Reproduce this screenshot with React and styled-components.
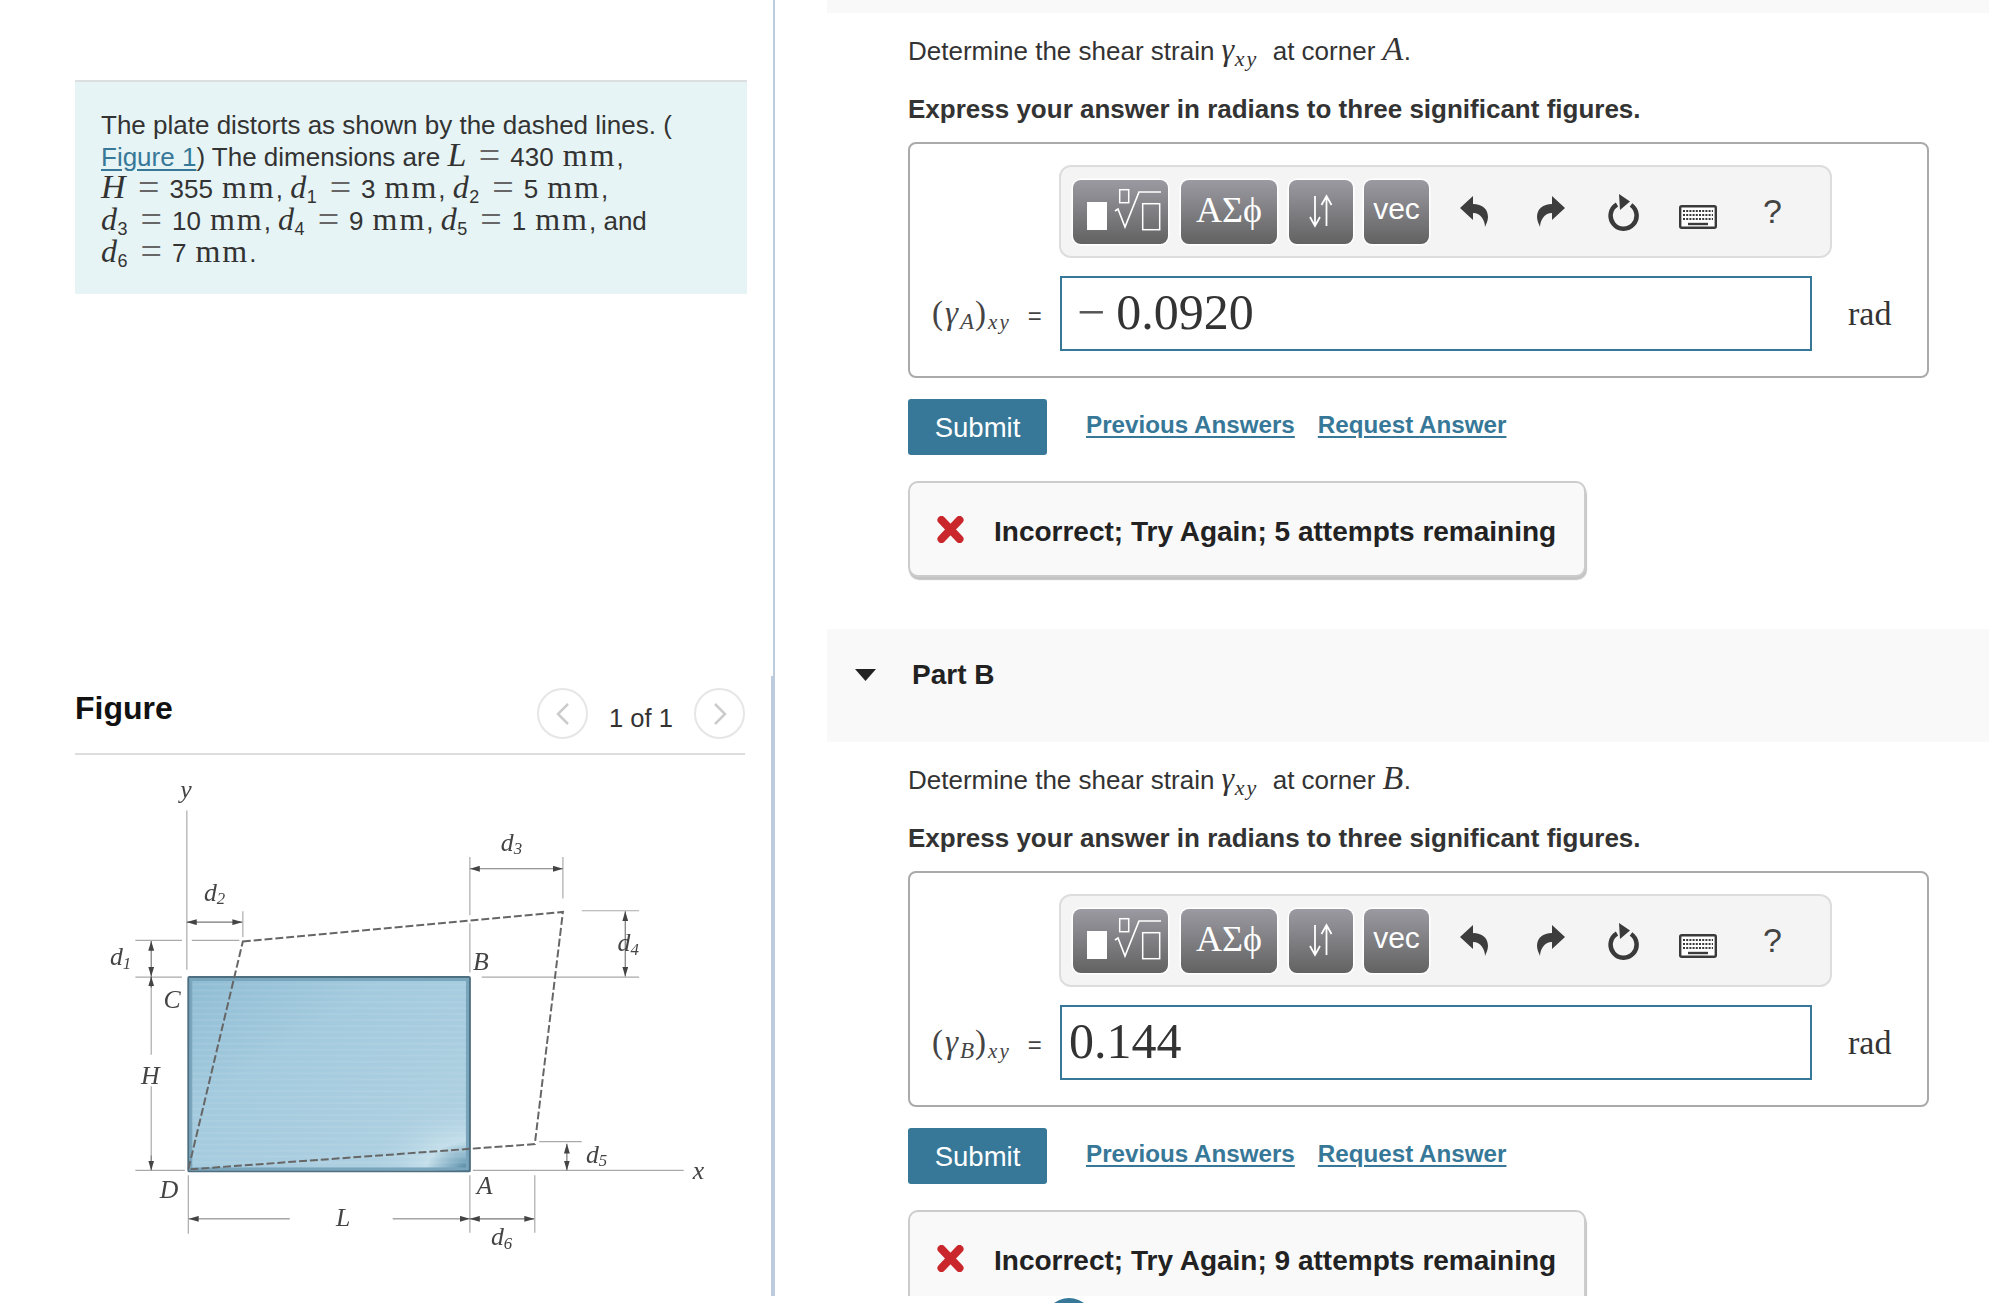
import React from 'react'
import styled, { createGlobalStyle } from 'styled-components'

const sans = `"Liberation Sans", Arial, sans-serif`
const serif = `"Liberation Serif", "Times New Roman", serif`
const teal = '#377898'

const Global = createGlobalStyle`
  html, body { margin: 0; padding: 0; background: #fff; }
  body { font-family: ${sans}; color: #333; }
`

const Screen = styled.div`
  position: relative;
  width: 1989px;
  height: 1303px;
  overflow: hidden;
  background: #fff;
`
const Page = styled.div`
  display: flex;
  height: 1296px;
  overflow: hidden;
`
const LeftPanel = styled.div`
  width: 696px;
  flex: none;
  padding: 80px 0 0 75px;
`
const InfoBox = styled.div`
  width: 672px;
  height: 214px;
  box-sizing: border-box;
  padding: 27px 0 0 26px;
  background: #e7f4f5;
  border-top: 2px solid #dcdfe0;
  font-size: 26px;
  line-height: 32px;
`
const Line = styled.div`
  white-space: nowrap;
`
const FigLink = styled.a`
  color: ${teal};
  text-decoration: underline;
  text-underline-offset: 3px;
`
const V = styled.i`
  font-family: ${serif};
  font-size: ${({ big }) => (big ? 34 : 32)}px;
  line-height: 0;
  letter-spacing: 0.5px;
`
const Sb = styled.span`
  font-size: 18px;
  vertical-align: -5px;
  line-height: 0;
  margin-right: 1px;
`
const Eq = styled.span`
  font-family: ${serif};
  font-size: 38px;
  line-height: 0;
  vertical-align: -2px;
  margin: 0 10px 0 12px;
  color: #666;
`
const Unit = styled.span`
  font-family: ${serif};
  font-size: 32px;
  line-height: 0;
  letter-spacing: 2px;
  margin-left: 9px;
`
const FigureHead = styled.div`
  margin-top: 394px;
  width: 670px;
  height: 65px;
  display: flex;
  justify-content: space-between;
  border-bottom: 2px solid #ddd;
`
const FigureTitle = styled.h2`
  margin: 0;
  font-size: 32px;
  line-height: 40px;
  font-weight: 700;
  color: #111;
`
const Pager = styled.div`
  display: flex;
  width: 208px;
  justify-content: space-between;
`
const PageCount = styled.span`
  font-size: 25.5px;
  line-height: 32px;
  padding-top: 14px;
`
const PageBtn = styled.div`
  width: 51px;
  height: 51px;
  box-sizing: border-box;
  border: 2px solid #e6e6e6;
  border-radius: 50%;
  display: flex;
  align-items: center;
  justify-content: center;
`
const FigureSvg = styled.svg`
  display: block;
  margin: 1px 0 0 1px;
  width: 670px;
  height: 540px;
  filter: blur(0.4px);
`
const Label = styled.text`
  font-family: ${serif};
  font-style: italic;
  font-size: ${({ size }) => size || 26}px;
  fill: #444;
  text-anchor: middle;
  dominant-baseline: central;
`
const Divider = styled.div`
  width: 4px;
  flex: none;
  display: flex;
  flex-direction: column;
  align-items: flex-end;
`
const DividerPart = styled.div`
  background: #bccbde;
  width: ${({ wide }) => (wide ? 4 : 2)}px;
  height: ${({ wide }) => (wide ? 620 : 676)}px;
`
const RightPanel = styled.div`
  margin-left: 52px;
  flex: 1;
`
const Strip = styled.div`
  height: ${({ h }) => h}px;
  background: #f9f9f9;
  display: flex;
  align-items: flex-start;
  padding-left: 28px;
  box-sizing: border-box;
`
const PartTitle = styled.h3`
  margin: 30px 0 0 36px;
  font-size: 28px;
  line-height: 32px;
  font-weight: 700;
  color: #222;
`
const Caret = styled.svg`
  width: 21px;
  height: 12px;
  margin-top: 40px;
`
const PartBody = styled.div`
  padding: 22px 0 52px 81px;
  height: 616px;
  box-sizing: border-box;
`
const Prompt = styled.p`
  margin: 0 0 26px;
  font-size: 26px;
  line-height: 32px;
  white-space: nowrap;
`
const Instruction = styled.p`
  margin: 0 0 17px;
  font-size: 26px;
  line-height: 32px;
  font-weight: 700;
`
const GammaSub = styled.span`
  font-family: ${serif};
  font-style: italic;
  font-size: 22px;
  vertical-align: -6px;
  line-height: 0;
  letter-spacing: 2px;
`
const AnswerBox = styled.div`
  width: 1021px;
  height: 236px;
  box-sizing: border-box;
  border: 2px solid #aaa;
  border-radius: 8px;
  padding-top: 21px;
`
const Toolbar = styled.div`
  margin-left: 149px;
  width: 773px;
  height: 93px;
  box-sizing: border-box;
  background: #f4f4f4;
  border: 2px solid #ddd;
  border-radius: 12px;
  display: flex;
  align-items: flex-start;
  padding: 13px 0 0 12px;
`
const MathBtn = styled.div`
  width: ${({ w }) => w}px;
  height: 64px;
  margin-right: ${({ gap }) => gap}px;
  flex: none;
  border-radius: 8px;
  background: linear-gradient(#9b9aa2, #626262);
  box-shadow: 0 0 0 1.5px #fff;
  color: #fff;
  display: flex;
  align-items: center;
  justify-content: center;
  font-family: ${({ sans: s }) => (s ? sans : serif)};
  font-size: ${({ sans: s }) => (s ? 30 : 36)}px;
  padding-bottom: ${({ sans: s }) => (s ? 6 : 4)}px;
  box-sizing: border-box;
`
const ToolIcon = styled.svg`
  flex: none;
  margin-left: ${({ ml }) => ml}px;
  margin-top: ${({ mt }) => mt}px;
`
const HelpMark = styled.span`
  flex: none;
  margin: 11px 0 0 46px;
  font-size: 34px;
  line-height: 40px;
  color: #444;
`
const AnswerRow = styled.div`
  margin-top: 18px;
  display: flex;
  align-items: center;
`
const AnswerLabel = styled.div`
  width: 150px;
  padding-left: 22px;
  box-sizing: border-box;
  font-family: ${serif};
  font-size: 33px;
  letter-spacing: 2px;
  white-space: nowrap;
  color: #444;
`
const SmallSub = styled.span`
  font-family: ${serif};
  font-style: italic;
  font-size: ${({ s }) => s || 21}px;
  vertical-align: -5px;
  line-height: 0;
  letter-spacing: ${({ s }) => (s ? 1 : 2)}px;
`
const EqSign = styled.span`
  font-family: ${sans};
  font-size: 24px;
  margin-left: 17px;
`
const Field = styled.div`
  width: 752px;
  height: 75px;
  box-sizing: border-box;
  border: 2px solid ${teal};
  padding-left: 7px;
  font-family: ${serif};
  font-size: 50px;
  line-height: 68px;
  color: #333;
`
const Minus = styled.span`
  margin: 0 11px 0 8px;
  color: #555;
`
const UnitText = styled.div`
  margin-left: 36px;
  font-family: ${serif};
  font-size: 34px;
  color: #333;
`
const ActionRow = styled.div`
  margin-top: 21px;
  display: flex;
  align-items: flex-start;
`
const SubmitBtn = styled.button`
  width: 139px;
  height: 56px;
  border: 0;
  border-radius: 3px;
  background: ${teal};
  color: #fff;
  font-family: ${sans};
  font-size: 27.5px;
  padding: 2px 0 0;
  margin-right: 39px;
`
const ActionLink = styled.a`
  font-size: 24.2px;
  line-height: 30px;
  margin: 11px 23px 0 0;
  font-weight: 700;
  color: ${teal};
  text-decoration: underline;
  text-underline-offset: 3px;
`
const Alert = styled.div`
  margin-top: 26px;
  width: 678px;
  height: 96px;
  box-sizing: border-box;
  border: 2px solid #ccc;
  border-radius: 10px;
  background: #f9f9f9;
  box-shadow: 1px 3px 1px #c4c4c4;
  display: flex;
  align-items: center;
  padding-left: 27px;
  gap: 30px;
  font-size: 28px;
  font-weight: 700;
  color: #222;
  white-space: nowrap;
`
const AlertText = styled.span`
  padding-top: 5px;
`
const Blob = styled.div`
  position: absolute;
  left: 1044px;
  top: 1298px;
  width: 50px;
  height: 50px;
  border-radius: 50%;
  background: ${teal};
`

const Defs = () => (
  <defs>
    <marker id="tip" viewBox="0 0 10 6" refX="10" refY="3" markerWidth="10" markerHeight="6" orient="auto-start-reverse" markerUnits="userSpaceOnUse">
      <path d="M0 0 L10 3 L0 6 Z" fill="#444" />
    </marker>
    <linearGradient id="plate" x1="0" y1="0" x2="1" y2="1">
      <stop offset="0" stopColor="#8fbcd3" />
      <stop offset="0.35" stopColor="#a3cade" />
      <stop offset="0.85" stopColor="#aed0e1" />
      <stop offset="1" stopColor="#b9d6e4" />
    </linearGradient>
    <radialGradient id="corner" cx="1" cy="1" r="0.35">
      <stop offset="0" stopColor="#3f7790" />
      <stop offset="0.18" stopColor="#7fabc2" />
      <stop offset="0.45" stopColor="#c4deea" />
      <stop offset="1" stopColor="#b0d2e2" stopOpacity="0" />
    </radialGradient>
    <pattern id="streaks" width="40" height="6" patternUnits="userSpaceOnUse">
      <rect y="2" width="40" height="2" fill="#fff" opacity="0.07" />
    </pattern>
  </defs>
)

const Thin = ({ d }) => <path d={d} fill="none" stroke="#aaa" strokeWidth="1.2" />
const Dim = ({ x1, y1, x2, y2 }) => (
  <line x1={x1} y1={y1} x2={x2} y2={y2} stroke="#777" strokeWidth="1.2" markerStart="url(#tip)" markerEnd="url(#tip)" />
)
const DVar = ({ x, y, n }) => (
  <Label x={x} y={y}>
    d<tspan dy="6" fontSize="17">{n}</tspan>
  </Label>
)

const PlateFigure = () => (
  <FigureSvg viewBox="75 756 677 546" preserveAspectRatio="none">
    <Defs />
    <Thin d="M187 811 V972 M135 942.5 H182 M192 942.5 H240 M135 979.5 H182 M135 1175 H185 M243.6 913 V939 M187 918 V930" />
    <Thin d="M473 858 V917 M473 925 V975 M567 858 V900 M586 912.5 H644 M485 979.5 H644 M543 1146 H586 M476 1175 H689" />
    <Thin d="M188.5 1180 V1239 M473 1180 V1238 M538.6 1190 V1200 M538.6 1180 V1238 M151 979 V1058 M151 1090 V1175" />
    <rect x="188.5" y="979.5" width="284.5" height="196.5" fill="url(#plate)" />
    <rect x="188.5" y="979.5" width="284.5" height="196.5" fill="url(#corner)" />
    <rect x="188.5" y="979.5" width="284.5" height="196.5" fill="url(#streaks)" />
    <rect x="191" y="982" width="279.5" height="191.5" fill="none" stroke="#79a5bd" strokeWidth="3" />
    <rect x="188.5" y="979.5" width="284.5" height="196.5" fill="none" stroke="#4d6f80" strokeWidth="2" rx="1" />
    <path d="M243.6 943.5 L567 913.7 L538.6 1148.4 L188.5 1174 Z" fill="none" stroke="#666" strokeWidth="2" strokeDasharray="8 3" />
    <Dim x1={473} y1={870} x2={567} y2={870} />
    <Dim x1={187} y1={924} x2={243} y2={924} />
    <Dim x1={151} y1={943} x2={151} y2={979} />
    <line x1={151} y1={979} x2={151} y2={990} stroke="#444" markerStart="url(#tip)" />
    <line x1={151} y1={1160} x2={151} y2={1175} stroke="#777" markerEnd="url(#tip)" />
    <Dim x1={630} y1={913} x2={630} y2={979} />
    <Dim x1={571} y1={1148} x2={571} y2={1175} />
    <line x1={189} y1={1224} x2={291} y2={1224} stroke="#777" markerStart="url(#tip)" />
    <line x1={395} y1={1224} x2={473} y2={1224} stroke="#777" markerEnd="url(#tip)" />
    <Dim x1={473} y1={1224} x2={538} y2={1224} />
    <Label x={186} y={790}>y</Label>
    <DVar x={515} y={843} n="3" />
    <DVar x={215} y={894} n="2" />
    <DVar x={120} y={959} n="1" />
    <DVar x={633} y={945} n="4" />
    <DVar x={601} y={1159} n="5" />
    <DVar x={505} y={1242} n="6" />
    <Label x={150} y={1079}>H</Label>
    <Label x={172} y={1002}>C</Label>
    <Label x={484} y={964}>B</Label>
    <Label x={169} y={1194}>D</Label>
    <Label x={488} y={1190}>A</Label>
    <Label x={345} y={1223}>L</Label>
    <Label x={704} y={1175}>x</Label>
  </FigureSvg>
)

const Chevron = ({ right }) => (
  <svg width="14" height="24" viewBox="0 0 14 24">
    <path d={right ? 'M2 2 L12 12 L2 22' : 'M12 2 L2 12 L12 22'} fill="none" stroke="#ccc" strokeWidth="2.5" />
  </svg>
)

const RootGlyph = () => (
  <svg width="95" height="64" viewBox="0 0 95 64">
    <rect x="14" y="24" width="20" height="28" fill="#fff" />
    <rect x="46.7" y="11.7" width="9" height="13" fill="none" stroke="#fff" strokeWidth="1.5" />
    <path d="M42 33 L45 31 L52 49 L66 14 H88" fill="none" stroke="#fff" strokeWidth="1.7" />
    <rect x="69.7" y="25.7" width="17" height="26" fill="none" stroke="#fff" strokeWidth="1.5" />
  </svg>
)

const SwapGlyph = () => (
  <svg width="64" height="64" viewBox="0 0 64 64">
    <path d="M26 18 V47 M21 39 L26 48 L31 39 M37.5 48 V19 M32.5 27 L37.5 18 L42.5 27" fill="none" stroke="#fff" strokeWidth="1.8" />
  </svg>
)

const UndoIcon = ({ flip }) => (
  <svg width="28" height="31" viewBox="0 0 28 31" style={flip ? { transform: 'scaleX(-1)' } : undefined}>
    <path d="M0 12 L13 0 V8 C22 8 28 13 28 21 C28 25 26 28 25 31 C25 25 21 17 13 17 V24 Z" fill="#3d3d3d" />
  </svg>
)

const KeyboardIcon = () => (
  <>
    <rect x="1.2" y="1.2" width="35.6" height="21.6" rx="1.5" fill="#fff" stroke="#3a3a3a" strokeWidth="2.4" />
    <path d="M4 6 H34 M4 10 H34 M4 14 H34" stroke="#3a3a3a" strokeWidth="2" strokeDasharray="2 1.2" />
    <path d="M9 19 H29" stroke="#3a3a3a" strokeWidth="2.4" />
  </>
)

const CrossIcon = () => (
  <svg width="27" height="27" viewBox="0 0 27 27">
    <path d="M4.5 4 L22.5 23 M22.5 4 L4.5 23" stroke="#c9272b" strokeWidth="8" strokeLinecap="round" />
  </svg>
)

const Part = ({ title, corner, value, negative, attempts }) => (
  <>
    {title ? (
      <Strip h={113}>
        <Caret viewBox="0 0 21 12"><path d="M0 0 H21 L10.5 12 Z" fill="#222" /></Caret>
        <PartTitle>{title}</PartTitle>
      </Strip>
    ) : (
      <Strip h={13} />
    )}
    <PartBody>
      <Prompt>
        Determine the shear strain <V>γ</V><GammaSub>xy</GammaSub>&nbsp; at corner <V big>{corner}</V>.
      </Prompt>
      <Instruction>Express your answer in radians to three significant figures.</Instruction>
      <AnswerBox>
        <Toolbar>
          <MathBtn w={95} gap={13}><RootGlyph /></MathBtn>
          <MathBtn w={96} gap={12}>ΑΣϕ</MathBtn>
          <MathBtn w={64} gap={11}><SwapGlyph /></MathBtn>
          <MathBtn w={65} gap={0} sans>vec</MathBtn>
          <ToolIcon as="div" ml={31} mt={16}><UndoIcon /></ToolIcon>
          <ToolIcon as="div" ml={49} mt={16}><UndoIcon flip /></ToolIcon>
          <ToolIcon width="32" height="37" viewBox="0 0 32 37" ml={42} mt={14}>
            <path d="M10 10.5 A13 13 0 1 0 24 11" fill="none" stroke="#3a3a3a" strokeWidth="4.5" />
            <path d="M12 0 L23 7.5 L13 16 Z" fill="#3a3a3a" />
          </ToolIcon>
          <ToolIcon width="38" height="24" viewBox="0 0 38 24" ml={40} mt={25}><KeyboardIcon /></ToolIcon>
          <HelpMark>?</HelpMark>
        </Toolbar>
        <AnswerRow>
          <AnswerLabel>
            (<i>γ</i><SmallSub s={23}>{corner}</SmallSub>)<SmallSub>xy</SmallSub><EqSign>=</EqSign>
          </AnswerLabel>
          <Field>
            {negative && <Minus>−</Minus>}
            {value}
          </Field>
          <UnitText>rad</UnitText>
        </AnswerRow>
      </AnswerBox>
      <ActionRow>
        <SubmitBtn>Submit</SubmitBtn>
        <ActionLink>Previous Answers</ActionLink>
        <ActionLink>Request Answer</ActionLink>
      </ActionRow>
      <Alert>
        <CrossIcon />
        <AlertText>Incorrect; Try Again; {attempts} attempts remaining</AlertText>
      </Alert>
    </PartBody>
  </>
)

export default function App() {
  return (
    <Screen>
      <Global />
      <Page>
        <LeftPanel>
          <InfoBox>
            <Line>The plate distorts as shown by the dashed lines. (</Line>
            <Line>
              <FigLink>Figure 1</FigLink>) The dimensions are <V big>L</V><Eq>=</Eq>430<Unit>mm</Unit>,
            </Line>
            <Line>
              <V big>H</V><Eq>=</Eq>355<Unit>mm</Unit>, <V>d</V><Sb>1</Sb><Eq>=</Eq>3<Unit>mm</Unit>, <V>d</V><Sb>2</Sb><Eq>=</Eq>5<Unit>mm</Unit>,
            </Line>
            <Line>
              <V>d</V><Sb>3</Sb><Eq>=</Eq>10<Unit>mm</Unit>, <V>d</V><Sb>4</Sb><Eq>=</Eq>9<Unit>mm</Unit>, <V>d</V><Sb>5</Sb><Eq>=</Eq>1<Unit>mm</Unit>, and
            </Line>
            <Line>
              <V>d</V><Sb>6</Sb><Eq>=</Eq>7<Unit>mm</Unit>.
            </Line>
          </InfoBox>
          <FigureHead>
            <FigureTitle>Figure</FigureTitle>
            <Pager>
              <PageBtn><Chevron /></PageBtn>
              <PageCount>1 of 1</PageCount>
              <PageBtn><Chevron right /></PageBtn>
            </Pager>
          </FigureHead>
          <PlateFigure />
        </LeftPanel>
        <Divider>
          <DividerPart />
          <DividerPart wide />
        </Divider>
        <RightPanel>
          <Part corner="A" value="0.0920" negative attempts={5} />
          <Part title="Part B" corner="B" value="0.144" attempts={9} />
        </RightPanel>
      </Page>
      <Blob />
    </Screen>
  )
}
